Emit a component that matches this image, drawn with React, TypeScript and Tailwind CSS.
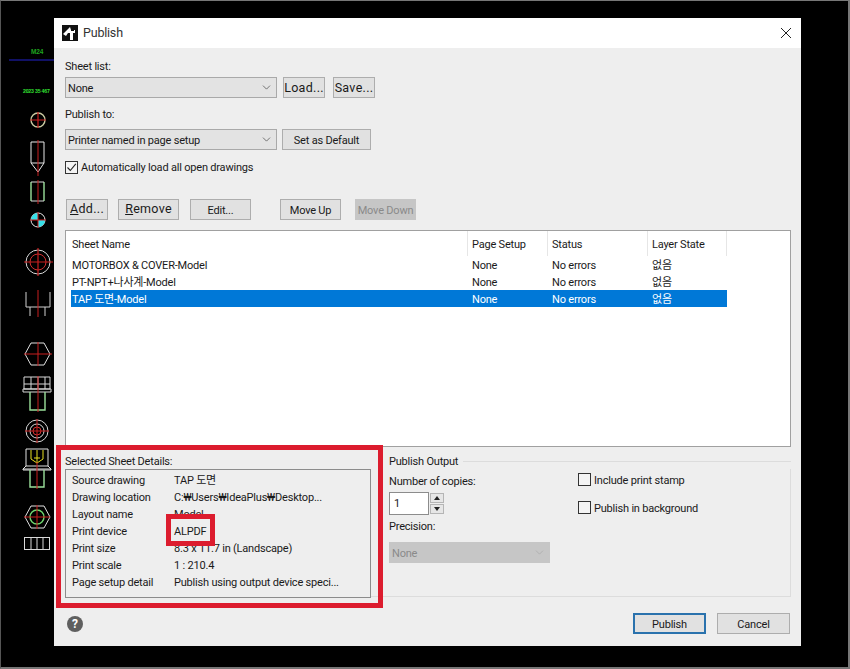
import { ChevronDown } from "lucide-react";

const uiFont = "font-['Roboto','Noto_Sans_CJK_KR',sans-serif]";

const sheets = [
  { name: "MOTORBOX & COVER-Model", selected: false },
  { name: "PT-NPT+나사계-Model", selected: false },
  { name: "TAP 도면-Model", selected: true },
];

const details = [
  ["Source drawing", "TAP 도면"],
  ["Drawing location", "C:₩Users₩IdeaPlus₩Desktop..."],
  ["Layout name", "Model"],
  ["Print device", "ALPDF"],
  ["Print size", "8.3 x 11.7 in (Landscape)"],
  ["Print scale", "1 : 210.4"],
  ["Page setup detail", "Publish using output device speci..."],
];

function CadStrip() {
  return (
    <svg width="53" height="667" viewBox="1 1 53 667" fill="none" className="shrink-0">
      <text x="31" y="54" fontSize="6.5" fontWeight="700" fill="#1fa31f" fontFamily="Liberation Sans">M24</text>
      <line x1="9" y1="60" x2="54" y2="60" stroke="#2222cc" />
      <text x="23" y="93" fontSize="5.2" fontWeight="700" fill="#33e033" fontFamily="Liberation Sans">2023 35 467</text>

      <circle cx="38" cy="120" r="7" stroke="#c8c8a0" strokeWidth="1.4" />
      <path d="M30 120H46M38 112V128" stroke="#c81e1e" strokeWidth="1.2" />

      <path d="M31 142H44V163L38 172L31 163ZM31 163H44" stroke="#e8e8e8" />
      <path d="M38 140V176" stroke="#c81e1e" />
      <path d="M31 182V201M44 182V201" stroke="#9be09b" strokeWidth="1.4" />
      <path d="M31 182H44M31 201H44" stroke="#d8d8d8" />
      <path d="M38 180V204" stroke="#c81e1e" />

      <circle cx="38" cy="220" r="7" fill="#000" stroke="#e8e8e8" />
      <path d="M38 220V213A7 7 0 0 0 31 220ZM38 220V227A7 7 0 0 0 45 220Z" fill="#35e0e8" />
      <path d="M30 220H46M38 212V228" stroke="#c81e1e" />

      <circle cx="38" cy="262" r="12" stroke="#d8d8d8" />
      <circle cx="38" cy="262" r="8" stroke="#d03030" />
      <path d="M24 262H53M38 248V276" stroke="#c81e1e" strokeWidth="1.2" />

      <path d="M26 292V307H50V292M30 307V316M45 307V316" stroke="#d0d0d0" />
      <path d="M38 290V317" stroke="#c81e1e" />

      <path d="M25 354L31 343H44L50 354L44 365H31Z" stroke="#e0e0e0" />
      <path d="M24 354H52M38 342V366" stroke="#c81e1e" />

      <path d="M24 377H50V389H24ZM23 389H51V392H23ZM31 377V389M38 377V389M45 377V389M24 384H50" stroke="#d8d8d8" />
      <path d="M30 392V410H45V392" stroke="#9be09b" strokeWidth="1.4" />
      <path d="M38 376V412" stroke="#c81e1e" />

      <circle cx="37" cy="431" r="11" stroke="#d8d8d8" />
      <circle cx="37" cy="431" r="7" stroke="#d8d8d8" />
      <circle cx="37" cy="431" r="4" stroke="#d03030" />
      <path d="M25 431H49M37 419V443" stroke="#c81e1e" />

      <path d="M26 449H48V466M26 449V466" stroke="#e0e0e0" />
      <path d="M31 450V459L37 463L43 459V450M37 450V463M34 458H40" stroke="#e8e020" />
      <path d="M26 466H48M23 469H51M23 469L26 466M51 469L48 466M23 469V470H51V469" stroke="#e0e0e0" />
      <path d="M30 470V487H44V470" stroke="#9be09b" strokeWidth="1.4" />
      <path d="M37 462V489" stroke="#c81e1e" />

      <path d="M25 517L31 506H44L50 517L44 528H31Z" stroke="#e0e0e0" />
      <circle cx="37" cy="517" r="7" stroke="#6fd66f" strokeWidth="1.4" />
      <path d="M24 517H50M37 505V529" stroke="#c81e1e" />

      <rect x="24.5" y="537.5" width="25" height="12" stroke="#d8d8d8" />
      <path d="M31 537V550M37 537V550M43 537V550" stroke="#d8d8d8" />
    </svg>
  );
}

function Button({
  children,
  className = "",
}: {
  children: React.ReactNode;
  className?: string;
}) {
  return (
    <button className={`h-[21px] flex items-center justify-center bg-[#e1e1e1] border border-[#adadad] text-[#1a1a1a] whitespace-nowrap ${className}`}>
      {children}
    </button>
  );
}

function Select({
  value,
  disabled,
  className = "",
}: {
  value: string;
  disabled?: boolean;
  className?: string;
}) {
  return (
    <div
      className={`h-[21px] flex items-center justify-between pl-[2px] pr-[3px] border ${
        disabled
          ? "bg-[#c6c6c6] border-[#c6c6c6] text-[#8a8a8a]"
          : "bg-[#e3e3e3] border-[#a9a9a9] text-[#1a1a1a]"
      } ${className}`}
    >
      <span className="pt-[2px]">{value}</span>
      <ChevronDown className={`w-[13px] h-[13px] ${disabled ? "text-[#a8a8a8]" : "text-[#444]"}`} strokeWidth={1.3} />
    </div>
  );
}

function Checkbox({ checked }: { checked?: boolean }) {
  return (
    <span className="w-[13px] h-[13px] shrink-0 bg-[#f4f4f4] border border-[#333] flex items-center justify-center">
      {checked && (
        <svg width="11" height="11" viewBox="0 0 11 11" fill="none">
          <path d="M1.5 5.5L4.3 8.5L9.8 1.8" stroke="#222" strokeWidth="1.1" />
        </svg>
      )}
    </span>
  );
}

export default function App() {
  return (
    <div className={`relative w-[850px] h-[669px] bg-black border-t border-l border-r-2 border-b-2 border-t-[#777] border-l-[#555] border-r-[#777] border-b-[#777] flex overflow-hidden ${uiFont} text-[11px] tracking-[-0.2px] leading-4 text-[#1a1a1a]`}>
      <CadStrip />

      <div className="w-[747px] h-[628px] mt-[17px] shrink-0 bg-[#eeeeee] flex flex-col">
        {/* title bar */}
        <div className="h-[30px] bg-white flex items-center justify-between pl-2 pr-[9px] shrink-0">
          <div className="flex items-center gap-[5px]">
            <svg width="16" height="16" viewBox="0 0 16 16">
              <rect width="16" height="16" fill="#111" />
              <path d="M1 9L8 2L9 5H13V8L11 8V15H8V8L6 8L4 11Z" fill="#fff" />
              <rect x="9" y="3" width="3" height="3" fill="#111" />
            </svg>
            <span className="text-[12.5px] text-[#333]">Publish</span>
          </div>
          <svg width="12" height="12" viewBox="0 0 12 12" fill="none">
            <path d="M1 1L11 11M11 1L1 11" stroke="#222" />
          </svg>
        </div>

        <div className="flex-1 flex flex-col pl-[11px] pr-[10px]">
          <div className="h-4 mt-[10px] leading-[18px]">Sheet list:</div>
          <div className="flex mt-[3px]">
            <Select value="None" className="w-[212px]" />
            <Button className="w-[42px] ml-[6px] text-[12.5px] tracking-[0.3px]">Load...</Button>
            <Button className="w-[42px] ml-2 text-[12.5px] tracking-[0.3px]">Save...</Button>
          </div>

          <div className="h-4 mt-2 leading-[18px]">Publish to:</div>
          <div className="flex mt-[7px]">
            <Select value="Printer named in page setup" className="w-[212px]" />
            <Button className="w-[89px] ml-[5px] pt-[2px]">Set as Default</Button>
          </div>

          <div className="h-[14px] mt-[10px] flex items-center gap-[3px]">
            <Checkbox checked />
            <span className="pt-[2px]">Automatically load all open drawings</span>
          </div>

          <div className="flex mt-[25px] ml-px">
            <Button className="w-[42px] text-[12.5px] tracking-[0.3px] pb-[2px]"><span className="underline">A</span>dd...</Button>
            <Button className="w-[61px] ml-[10px] text-[12.5px] tracking-[0.3px] pb-[2px]"><span className="underline">R</span>emove</Button>
            <Button className="w-[61px] ml-[11px] pt-[2px]">Edit...</Button>
            <Button className="w-[61px] ml-[29px] pt-[2px]">Move Up</Button>
            <Button className="w-[61px] ml-[14px] pt-[2px] !bg-[#c6c6c6] !border-[#c6c6c6] !text-[#8a8a8a]">Move Down</Button>
          </div>

          {/* sheet table */}
          <div className="h-[217px] mt-[10px] bg-white border border-[#a0a0a0] pl-[5px] shrink-0">
            <div className="grid grid-cols-[396px_80px_100px_80px] w-[656px] h-[25px] items-center">
              <div className="pl-px pt-[2px]">Sheet Name</div>
              <div className="h-full pl-[4px] pt-[2px] flex items-center border-l border-[#e6e6e6]">Page Setup</div>
              <div className="h-full pl-[4px] pt-[2px] flex items-center border-l border-[#e6e6e6]">Status</div>
              <div className="h-full pl-[4px] pt-[2px] flex items-center border-x border-[#e6e6e6]">Layer State</div>
            </div>
            {sheets.map((sheet) => (
              <div
                key={sheet.name}
                className={`grid grid-cols-[396px_80px_100px_80px] w-[656px] h-[17px] pt-[2px] items-center ${
                  sheet.selected ? "bg-[#0078d7] text-white" : "text-[#1a1a1a]"
                }`}
              >
                <div className="pl-px">{sheet.name}</div>
                <div className="pl-[5px]">None</div>
                <div className="pl-[5px]">No errors</div>
                <div className="pl-[5px]">없음</div>
              </div>
            ))}
          </div>

          <div className="flex">
            {/* selected sheet details */}
            <div className="w-[306px] shrink-0 pt-[6px]">
              <div className="h-4 leading-[18px]">Selected Sheet Details:</div>
              <div className="h-[129px] border border-[#8c8c8c] pl-[6px] pt-[2px]">
                {details.map(([label, value]) => (
                  <div key={label} className="flex h-[17px] items-center">
                    <span className="w-[102px]">{label}</span>
                    <span>{value}</span>
                  </div>
                ))}
              </div>
            </div>

            {/* publish output */}
            <div className="flex-1 pt-[6px] flex flex-col">
              <div className="h-4 flex items-center pl-[18px]">
                <span className="pr-[5px] pt-[2px]">Publish Output</span>
                <span className="flex-1 h-px bg-[#dcdcdc]" />
              </div>
              <div className="h-[128px] flex pl-[18px] border-r border-b border-[#dcdcdc]">
                <div className="w-[189px] pt-1">
                  <div className="h-4 leading-[18px]">Number of copies:</div>
                  <div className="flex mt-[3px]">
                    <div className="w-[40px] h-[23px] bg-white border border-[#8c8c8c] pl-[4px] flex items-center">1</div>
                    <div className="ml-px mt-px flex flex-col gap-px">
                      <div className="w-[14px] h-[10px] bg-[#e6e6e6] border border-[#b5b5b5] flex items-center justify-center">
                        <svg width="6" height="4" viewBox="0 0 6 4"><path d="M3 0L6 4H0Z" fill="#222" /></svg>
                      </div>
                      <div className="w-[14px] h-[10px] bg-[#e6e6e6] border border-[#b5b5b5] flex items-center justify-center">
                        <svg width="6" height="4" viewBox="0 0 6 4"><path d="M0 0H6L3 4Z" fill="#222" /></svg>
                      </div>
                    </div>
                  </div>
                  <div className="h-4 mt-[3px] leading-[18px]">Precision:</div>
                  <Select value="None" disabled className="w-[161px] mt-2" />
                </div>
                <div className="pt-1">
                  <div className="h-[13px] flex items-center gap-[3px]">
                    <Checkbox />
                    <span className="pt-[2px]">Include print stamp</span>
                  </div>
                  <div className="h-[13px] mt-[15px] flex items-center gap-[3px]">
                    <Checkbox />
                    <span className="pt-[2px]">Publish in background</span>
                  </div>
                </div>
              </div>
            </div>
          </div>

          {/* footer */}
          <div className="flex items-center justify-between mt-[15px] pr-px">
            <span className="ml-[2px] w-4 h-4 rounded-full bg-[#5f5f5f] text-white font-bold text-[12px] flex items-center justify-center">?</span>
            <div className="flex gap-[11px]">
              <Button className="w-[73px] pt-[2px] border-2 !border-[#2a72ad]">Publish</Button>
              <Button className="w-[73px] pt-[2px]">Cancel</Button>
            </div>
          </div>
        </div>
      </div>

      {/* red callouts drawn on top of the screenshot */}
      <div className="absolute left-[55px] top-[444px] w-[327px] h-[163px] border-[5px] border-[#dc1c2e] pointer-events-none" />
      <div className="absolute left-[165px] top-[513px] w-[49px] h-[32px] border-[5px] border-[#dc1c2e] pointer-events-none" />
    </div>
  );
}
